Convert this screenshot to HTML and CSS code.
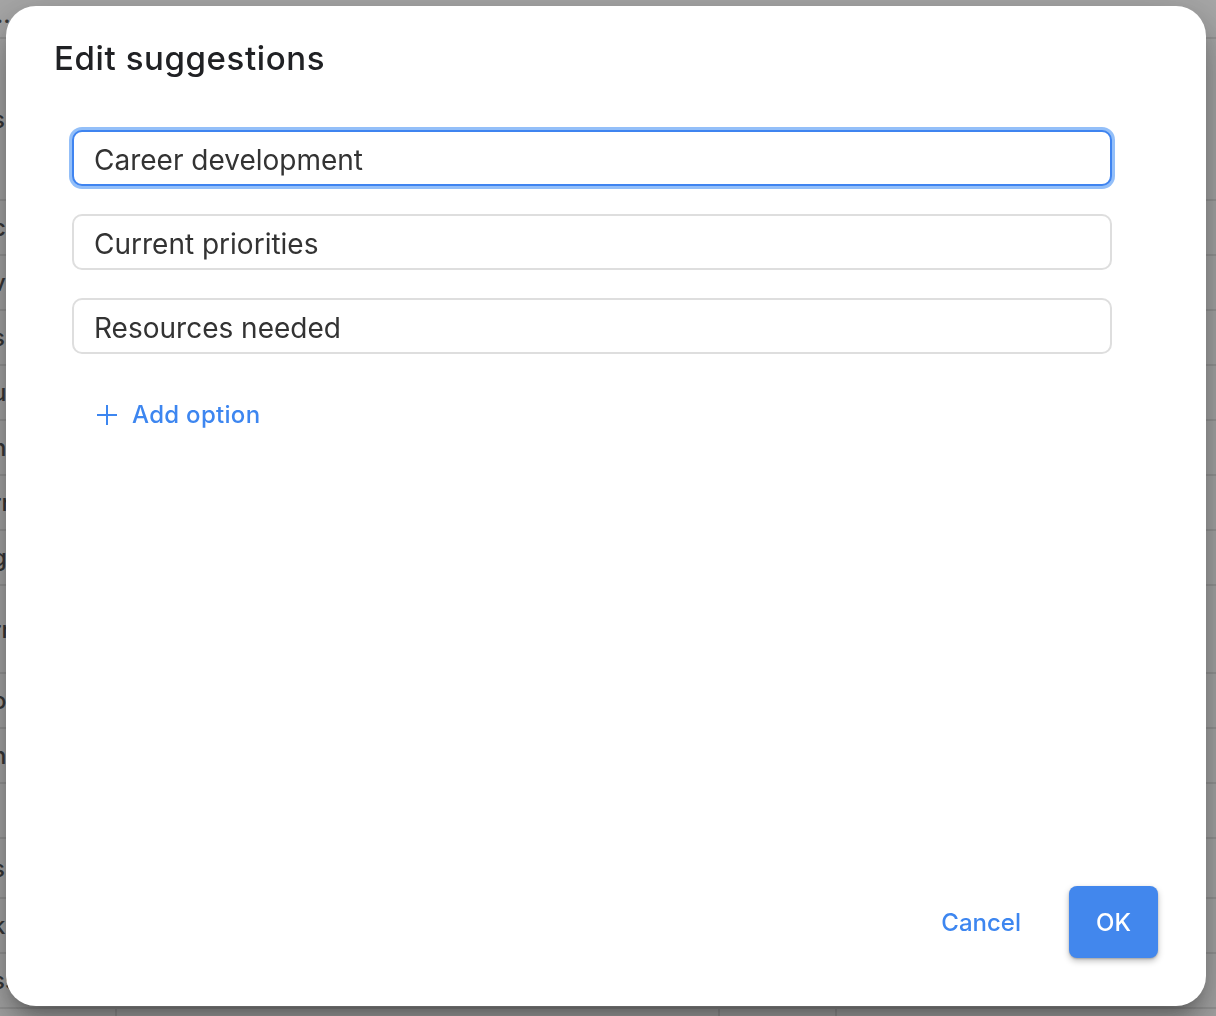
FILE: index.html
```html
<!DOCTYPE html>
<html lang="en">
<head>
<meta charset="utf-8">
<title>Edit suggestions</title>
<link rel="stylesheet" href="styles.css">
</head>
<body>
<div class="page">
  <div class="row r-top"><span class="cell dots">…</span></div>
  <div class="row r-lg"><span class="cell">ss</span></div>
  <div class="row r-sm"><span class="cell">cc</span></div>
  <div class="row r-sm"><span class="cell">vw</span></div>
  <div class="row r-sm"><span class="cell">ss</span></div>
  <div class="row r-sm"><span class="cell">uu</span></div>
  <div class="row r-sm"><span class="cell">nc</span></div>
  <div class="row r-sm"><span class="cell">rr</span></div>
  <div class="row r-sm"><span class="cell">gg</span></div>
  <div class="row r-xl"><span class="cell">rr</span></div>
  <div class="row r-sm"><span class="cell">oo</span></div>
  <div class="row r-sm"><span class="cell">nn</span></div>
  <div class="row r-sm"><span class="cell"></span></div>
  <div class="row r-md2"><span class="cell">ss</span></div>
  <div class="row r-sm"><span class="cell">kk</span></div>
  <div class="row r-sm"><span class="cell">ss</span></div>
  <div class="row r-foot"><span class="foot-cell"></span><span class="foot-cell wide"></span><span class="foot-cell"></span></div>
</div>
<div class="overlay"></div>
<div class="dialog" role="dialog" aria-labelledby="dlg-title">
  <h1 class="dialog-title" id="dlg-title">Edit suggestions</h1>
  <div class="options">
    <input class="option focused" type="text" value="Career development">
    <input class="option" type="text" value="Current priorities">
    <input class="option" type="text" value="Resources needed">
  </div>
  <button class="add-option" type="button">
    <svg class="plus" viewBox="0 0 22 22" width="22" height="22" aria-hidden="true"><path d="M11 1v20M1 11h20" stroke="currentColor" stroke-width="2" fill="none"/></svg>
    <span>Add option</span>
  </button>
  <div class="spacer"></div>
  <div class="actions">
    <button class="btn-text" type="button">Cancel</button>
    <button class="btn-primary" type="button">OK</button>
  </div>
</div>
</body>
</html>
```

FILE: styles.css
```css
html, body {
  margin: 0;
  padding: 0;
  height: 100%;
  overflow: hidden;
}
body {
  background: #ffffff;
  font-family: Inter, "Noto Sans", "Liberation Sans", sans-serif;
  color: #333;
}
.page {
  display: flex;
  flex-direction: column;
}
.row {
  border-bottom: 2px solid #e6e6e6;
  display: flex;
  align-items: center;
  box-sizing: border-box;
}
.r-top { height: 39px; }
.r-lg { height: 162px; }
.r-sm { height: 55px; }
.r-xl { height: 88px; }
.r-md2 { height: 60px; }
.r-foot { height: 7px; border-bottom: none; }
.cell {
  font-size: 24px;
  font-weight: 500;
  color: #555;
  width: 10px;
  overflow: hidden;
  white-space: nowrap;
  text-indent: -8px;
}
.dots {
  width: 30px;
  text-indent: -4px;
  align-self: flex-start;
  line-height: 30px;
}
.foot-cell {
  align-self: stretch;
  width: 115px;
  border-right: 2px solid #e6e6e6;
}
.foot-cell.wide { width: 601px; }
.overlay {
  position: fixed;
  inset: 0;
  background: rgba(0, 0, 0, 0.35);
}
.dialog {
  position: fixed;
  left: 6px;
  top: 6px;
  width: 1200px;
  height: 1000px;
  box-sizing: border-box;
  background: #fff;
  border-radius: 30px;
  padding: 0 48px 48px 48px;
  display: flex;
  flex-direction: column;
  box-shadow: 0 11px 15px -7px rgba(0,0,0,.25), 0 24px 38px 3px rgba(0,0,0,.22), 0 9px 46px 8px rgba(0,0,0,.12);
}
.dialog-title {
  margin: 32px 0 0 0;
  font-size: 33px;
  line-height: 40px;
  font-weight: 500;
  color: #202124;
  letter-spacing: 0.6px;
}
.options {
  display: flex;
  flex-direction: column;
  gap: 28px;
  margin: 52px 46px 0 18px;
}
.option {
  height: 56px;
  box-sizing: border-box;
  border: 2px solid #dedede;
  border-radius: 10px;
  padding: 3px 20px 0 20px;
  font-family: inherit;
  font-size: 28px;
  color: #333;
  background: #fff;
  outline: none;
}
.option.focused {
  border-color: #3f84f0;
  box-shadow: 0 0 0 3px #93bff9;
}
.add-option {
  align-self: flex-start;
  margin: 46px 0 0 42px;
  padding: 0;
  border: none;
  background: none;
  display: flex;
  align-items: center;
  gap: 14px;
  color: #3d86f0;
  font-family: inherit;
  font-size: 24px;
  letter-spacing: 0.3px;
  font-weight: 500;
  cursor: pointer;
}
.plus { display: block; }
.spacer { flex: 1; }
.actions {
  display: flex;
  justify-content: flex-end;
  align-items: center;
  gap: 24px;
}
.btn-text {
  height: 72px;
  padding: 0 24px;
  border: none;
  background: none;
  color: #3d86f0;
  font-family: inherit;
  font-size: 24px;
  font-weight: 500;
}
.btn-primary {
  height: 72px;
  width: 89px;
  border: none;
  border-radius: 8px;
  background: #4287ed;
  color: #fff;
  font-family: inherit;
  font-size: 24px;
  font-weight: 500;
  box-shadow: 0 3px 6px rgba(0,0,0,.25), 0 1px 2px rgba(0,0,0,.2);
}
```
